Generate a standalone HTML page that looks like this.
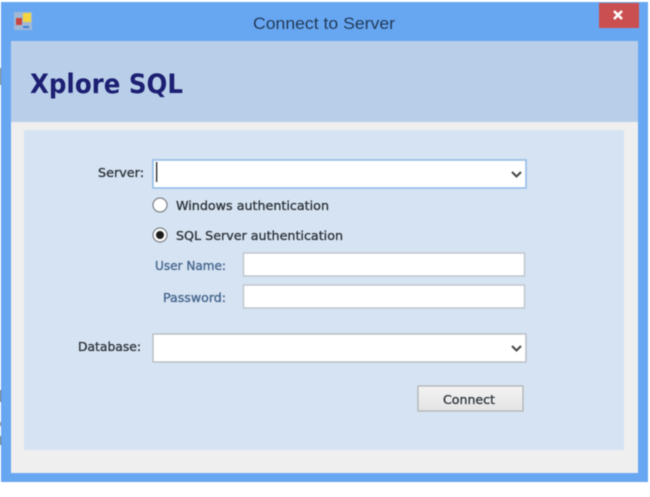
<!DOCTYPE html>
<html><head><meta charset="utf-8"><style>
html,body{margin:0;padding:0;background:#fff;width:650px;height:497px;overflow:hidden}
svg{display:block;filter:blur(.45px)}
text{font-family:"DejaVu Sans","Liberation Sans",sans-serif;font-size:12px;stroke-width:.3px}
</style></head><body>
<svg width="650" height="497" viewBox="0 0 650 497" xmlns="http://www.w3.org/2000/svg">
<rect width="650" height="497" fill="#fff"/>
<rect x="1" y="2" width="647" height="480" fill="#67a7f2"/>
<rect x="0" y="68" width="1" height="17" fill="#6d7580"/>
<rect x="0" y="390" width="1" height="12" fill="#5d6570"/>
<rect x="0" y="422" width="1" height="4" fill="#7d8590"/>
<rect x="0" y="436" width="1" height="9" fill="#5d6570"/>
<rect x="11" y="41" width="627" height="432" fill="#efefef"/>
<rect x="11" y="41" width="627" height="81" fill="#b9cfe9"/>
<rect x="24" y="130" width="600" height="320" fill="#d6e3f2"/>
<rect x="599" y="3" width="40" height="25" fill="#c94f50"/>
<path d="M614 11l8 8M622 11l-8 8" stroke="#fff" stroke-width="2.6"/>
<rect x="14" y="12" width="18" height="18" fill="#9fb8d6"/>
<rect x="23" y="13" width="8" height="9" fill="#f5d442"/>
<rect x="16" y="18" width="6" height="7" fill="#c8453f"/>
<rect x="23" y="26" width="6" height="2" fill="#3f7fd8"/>
<text x="253" y="29" style="font-family:'Liberation Sans',sans-serif;font-size:17px" fill="#223a58" textLength="142" lengthAdjust="spacingAndGlyphs">Connect to Server</text>
<text x="30" y="93" style="font-size:27px;font-weight:bold" fill="#1c1f72" textLength="153" lengthAdjust="spacingAndGlyphs">Xplore SQL</text>

<text x="98" y="177" fill="#2b3239" stroke="#2b3239" textLength="46" lengthAdjust="spacingAndGlyphs">Server:</text>
<rect x="153" y="160" width="373" height="28" fill="#fff" stroke="#8fbbe6" stroke-width="1.5"/>
<rect x="156" y="162" width="1.3" height="20" fill="#222"/>
<path d="M512 172l4.500 4.500l4.500-4.500" fill="none" stroke="#444" stroke-width="2"/>

<circle cx="160" cy="205" r="7" fill="#fff" stroke="#7d8288" stroke-width="1.2"/>
<text x="176" y="210" fill="#2b3239" stroke="#2b3239" textLength="153" lengthAdjust="spacingAndGlyphs">Windows authentication</text>
<circle cx="160" cy="235" r="7" fill="#fff" stroke="#7d8288" stroke-width="1.2"/>
<circle cx="160" cy="235" r="4" fill="#1c1c1c"/>
<text x="176" y="240" fill="#2b3239" stroke="#2b3239" textLength="167" lengthAdjust="spacingAndGlyphs">SQL Server authentication</text>

<text x="155" y="270" fill="#44648c" stroke="#44648c" textLength="71" lengthAdjust="spacingAndGlyphs">User Name:</text>
<rect x="243.500" y="253" width="281" height="23" fill="#fff" stroke="#bcc2c8" stroke-width="1.300"/>
<text x="163" y="302" fill="#44648c" stroke="#44648c" textLength="63" lengthAdjust="spacingAndGlyphs">Password:</text>
<rect x="243.500" y="285" width="281" height="23" fill="#fff" stroke="#bcc2c8" stroke-width="1.300"/>

<text x="78" y="351" fill="#2b3239" stroke="#2b3239" textLength="63" lengthAdjust="spacingAndGlyphs">Database:</text>
<rect x="153" y="334" width="373" height="28" fill="#fff" stroke="#b4b9be" stroke-width="1.300"/>
<path d="M512 346l4.500 4.500l4.500-4.500" fill="none" stroke="#444" stroke-width="2"/>

<defs><linearGradient id="b" x1="0" y1="0" x2="0" y2="1"><stop offset="0" stop-color="#f3f3f3"/><stop offset="1" stop-color="#e4e4e4"/></linearGradient></defs>
<rect x="418" y="386" width="105" height="25" fill="url(#b)" stroke="#aeb0b2" stroke-width="1.200"/>
<text x="443" y="404" fill="#2b3239" stroke="#2b3239" textLength="52" lengthAdjust="spacingAndGlyphs">Connect</text>
</svg>
</body></html>
